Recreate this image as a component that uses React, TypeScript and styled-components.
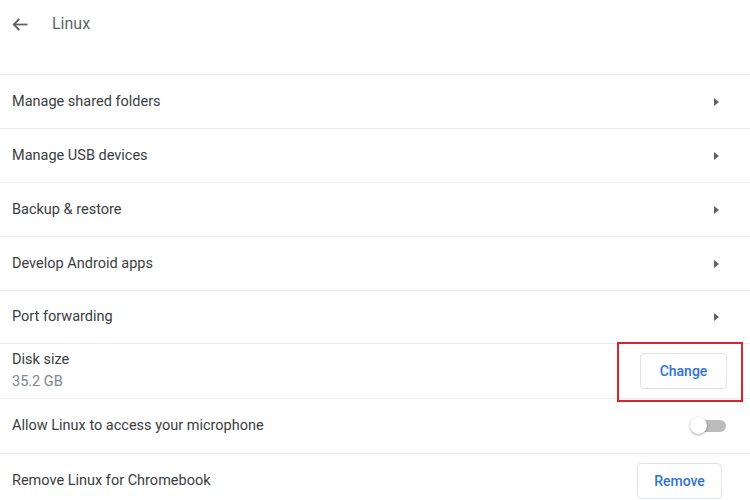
import React from 'react';
import styled, { createGlobalStyle } from 'styled-components';

const GlobalStyle = createGlobalStyle`
  html, body {
    margin: 0;
    padding: 0;
    background: #ffffff;
  }
  body {
    font-family: Roboto, "Liberation Sans", Arial, sans-serif;
    color: #3c4043;
  }
`;

const Page = styled.div`
  width: 750px;
  height: 500px;
  overflow: hidden;
  background: #ffffff;
`;

const Header = styled.div`
  height: 74px;
  box-sizing: border-box;
  padding: 14px 12px 0 12px;
  display: flex;
  align-items: flex-start;
  gap: 24px;
`;

const BackButton = styled.div`
  width: 16px;
  height: 20px;
  display: flex;
  align-items: center;
  color: #5f6368;
`;

const Title = styled.div`
  font-size: 16px;
  line-height: 20px;
  color: #5f6368;
`;

const List = styled.div`
  display: flex;
  flex-direction: column;
`;

const Row = styled.div<{ $height?: number }>`
  height: ${props => props.$height ?? 54}px;
  box-sizing: border-box;
  border-top: 1px solid #ececec;
  padding: 0 23px 0 12px;
  display: flex;
  align-items: center;
  justify-content: space-between;
  flex-shrink: 0;
`;

const Label = styled.div`
  display: flex;
  flex-direction: column;
  gap: 4px;
`;

const Primary = styled.span`
  font-size: 14.5px;
  line-height: 18px;
  color: #3a3d40;
`;

const Secondary = styled.span`
  font-size: 14.5px;
  line-height: 18px;
  color: #80868b;
`;

const Action = styled.div<{ $inset?: number }>`
  display: flex;
  align-items: center;
  margin-right: ${props => props.$inset ?? 0}px;
`;

const Arrow = styled.div`
  width: 0;
  height: 0;
  border-top: 4px solid transparent;
  border-bottom: 4px solid transparent;
  border-left: 5px solid #5f6368;
`;

const Highlight = styled.div`
  position: relative;

  &::after {
    content: '';
    position: absolute;
    top: -11px;
    bottom: -13px;
    left: -23px;
    right: -16px;
    border: 2px solid #d8242c;
    pointer-events: none;
  }
`;

const Button = styled.button<{ $width: number }>`
  width: ${props => props.$width}px;
  height: 36px;
  padding: 0;
  background: #ffffff;
  border: 1px solid #e1e3e6;
  border-radius: 4px;
  font-family: Roboto, "Liberation Sans", Arial, sans-serif;
  font-size: 14px;
  font-weight: 500;
  color: #2f74d0;
  cursor: pointer;
`;

const Toggle = styled.div`
  position: relative;
  width: 32px;
  height: 12px;
  border-radius: 6px;
  background: #bcbcbc;
`;

const Knob = styled.div`
  position: absolute;
  left: -4px;
  top: -3px;
  width: 17px;
  height: 17px;
  border-radius: 50%;
  background: #ffffff;
  box-shadow: 0 1px 3px rgba(0, 0, 0, 0.35);
`;

const BackArrow = () => (
  <svg width="16" height="13" viewBox="0 0 16 13" fill="none">
    <path d="M15.5 6.5H1.8" stroke="currentColor" strokeWidth="1.8" />
    <path d="M7.3 1L1.8 6.5L7.3 12" stroke="currentColor" strokeWidth="1.8" />
  </svg>
);

const links = [
  'Manage shared folders',
  'Manage USB devices',
  'Backup & restore',
  'Develop Android apps',
  'Port forwarding',
];

const App: React.FC = () => {
  return (
    <>
      <GlobalStyle />
      <Page>
        <Header>
          <BackButton>
            <BackArrow />
          </BackButton>
          <Title>Linux</Title>
        </Header>
        <List>
          {links.map((text, index) => (
            <Row key={text} $height={index === 4 ? 53 : 54}>
              <Primary>{text}</Primary>
              <Action $inset={8}>
                <Arrow />
              </Action>
            </Row>
          ))}
          <Row $height={55}>
            <Label>
              <Primary>Disk size</Primary>
              <Secondary>35.2 GB</Secondary>
            </Label>
            <Action>
              <Highlight>
                <Button $width={87}>Change</Button>
              </Highlight>
            </Action>
          </Row>
          <Row $height={55}>
            <Primary>Allow Linux to access your microphone</Primary>
            <Action $inset={1}>
              <Toggle>
                <Knob />
              </Toggle>
            </Action>
          </Row>
          <Row>
            <Primary>Remove Linux for Chromebook</Primary>
            <Action $inset={5}>
              <Button $width={85}>Remove</Button>
            </Action>
          </Row>
        </List>
      </Page>
    </>
  );
};

export default App;
